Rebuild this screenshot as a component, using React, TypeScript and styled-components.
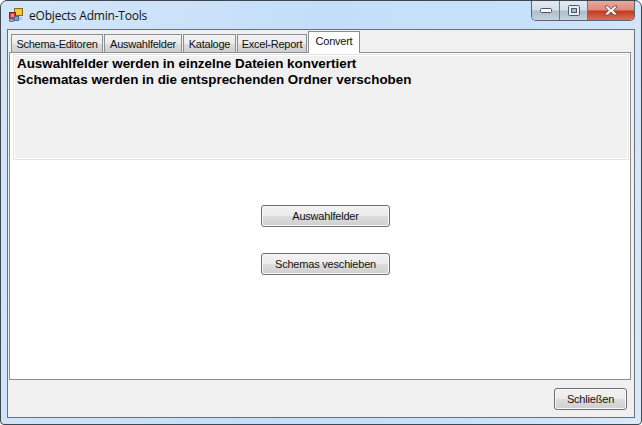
import React from "react";
import styled, { createGlobalStyle } from "styled-components";

const GlobalStyle = createGlobalStyle`
  html, body {
    margin: 0;
    padding: 0;
    background: #fff;
  }
  * {
    box-sizing: border-box;
  }
`;

const tabs = [
  { title: "Schema-Editoren", width: 92 },
  { title: "Auswahlfelder", width: 78 },
  { title: "Kataloge", width: 53 },
  { title: "Excel-Report", width: 70 },
  { title: "Convert", width: 52 },
];

function AppIcon() {
  return (
    <svg width="16" height="16" viewBox="0 0 16 16">
      <rect x="6.5" y="1.5" width="8" height="7" fill="#f5c63c" stroke="#8a6a1c" />
      <rect x="1.5" y="5.5" width="6" height="6" fill="#d8382c" stroke="#7c2420" />
      <rect x="3" y="7" width="3" height="3" fill="#f09080" />
      <rect x="6.5" y="9.5" width="4" height="4" fill="#7f9cc8" stroke="#51698f" />
      <rect x="1.5" y="12" width="4" height="2.5" fill="#8fa8cc" stroke="#6d83a5" />
      <rect x="11" y="10" width="3" height="3" fill="#b8c6da" />
    </svg>
  );
}

function MinGlyph() {
  return (
    <svg width="12" height="6" viewBox="0 0 12 6">
      <rect x="0.5" y="0.5" width="11" height="4" rx="1" fill="#fff" stroke="#4a5564" />
    </svg>
  );
}

function MaxGlyph() {
  return (
    <svg width="12" height="11" viewBox="0 0 12 11">
      <rect x="0.5" y="0.5" width="11" height="10" rx="1" fill="#e8eef5" stroke="#4f5b6b" />
      <rect x="3.5" y="3.5" width="5" height="4" fill="#a9b8c8" stroke="#4f5b6b" />
    </svg>
  );
}

function CloseGlyph() {
  return (
    <svg width="14" height="11" viewBox="0 0 14 11">
      <path
        d="M1 1h3l3 3 3-3h3v1l-3.500 3.500 3.500 3.500v1h-3l-3-3-3 3h-3v-1l3.500-3.500-3.500-3.500z"
        fill="#f0f0f0"
        stroke="#5c4a48"
        strokeWidth="0.8"
      />
    </svg>
  );
}

export default function App() {
  return (
    <>
      <GlobalStyle />
      <Window>
        <TitleBar>
          <AppIcon />
          <Title>eObjects Admin-Tools</Title>
          <CaptionButtons>
            <CaptionButton>
              <MinGlyph />
            </CaptionButton>
            <CaptionButton>
              <MaxGlyph />
            </CaptionButton>
            <CloseButton>
              <CloseGlyph />
            </CloseButton>
          </CaptionButtons>
        </TitleBar>
        <Client>
          <TabStrip>
            {tabs.map((tab) => (
              <Tab key={tab.title} $active={tab.title === "Convert"} $width={tab.width}>
                {tab.title}
              </Tab>
            ))}
          </TabStrip>
          <TabPage>
            <InfoPanel>
              <InfoLine>Auswahlfelder werden in einzelne Dateien konvertiert</InfoLine>
              <InfoLine>Schematas werden in die entsprechenden Ordner verschoben</InfoLine>
            </InfoPanel>
            <ActionArea>
              <Button $width={129}>Auswahlfelder</Button>
              <Button $width={129}>Schemas veschieben</Button>
            </ActionArea>
          </TabPage>
          <Footer>
            <Button $width={73}>Schließen</Button>
          </Footer>
        </Client>
      </Window>
    </>
  );
}

const Window = styled.div`
  width: 642px;
  height: 425px;
  padding: 0 6px 7px;
  border: 1px solid #3e4650;
  border-radius: 7px 7px 4px 4px;
  background: linear-gradient(100deg, #d3e6f8 0%, #c4def9 45%, #c8e1fb 75%, #d9e9f8 100%);
  overflow: hidden;
`;

const TitleBar = styled.div`
  height: 28px;
  display: flex;
  align-items: center;
  padding-left: 1px;
`;

const Title = styled.span`
  margin-left: 5px;
  font: 12px "Open Sans", "Liberation Sans", sans-serif;
  letter-spacing: -0.2px;
  color: #111;
`;

const CaptionButtons = styled.div`
  margin-left: auto;
  align-self: flex-start;
  height: 20px;
  display: flex;
  border: 1px solid #5b6470;
  border-top: none;
  border-radius: 0 0 5px 5px;
  overflow: hidden;
`;

const CaptionButton = styled.div`
  width: 28px;
  display: flex;
  align-items: center;
  justify-content: center;
  border-right: 1px solid #6b7683;
  background: linear-gradient(#e1e9f2 0%, #d5dfe9 48%, #aebdcb 52%, #c6d3de 100%);
`;

const CloseButton = styled.div`
  width: 46px;
  display: flex;
  align-items: center;
  justify-content: center;
  background: linear-gradient(#e9a99c 0%, #dc8c7c 45%, #c63c22 55%, #d8705a 100%);
`;

const Client = styled.div`
  height: 389px;
  display: flex;
  flex-direction: column;
  padding: 3px 3px 0 1px;
  border: 1px solid #6a7078;
  background: #f0f0f0;
`;

const TabStrip = styled.div`
  height: 19px;
  display: flex;
  align-items: flex-end;
  padding-left: 2px;
  gap: 1px;
  position: relative;
  z-index: 1;
`;

const Tab = styled.div<{ $active?: boolean; $width: number }>`
  width: ${(props) => props.$width}px;
  height: ${(props) => (props.$active ? "22px" : "18px")};
  padding-bottom: ${(props) => (props.$active ? "3px" : "0")};
  margin-bottom: ${(props) => (props.$active ? "-1px" : "0")};
  display: flex;
  align-items: center;
  justify-content: center;
  font: 11px "Liberation Sans", Arial, sans-serif;
  letter-spacing: -0.25px;
  color: #111;
  border: 1px solid #8c8e94;
  border-bottom: none;
  background: ${(props) =>
    props.$active ? "#fff" : "linear-gradient(#f3f3f3 0%, #ebebeb 50%, #dcdcdc 52%, #cfcfcf 100%)"};
`;

const TabPage = styled.div`
  flex: 1;
  min-height: 0;
  display: flex;
  flex-direction: column;
  padding: 1px 1px 0 3px;
  border: 1px solid #8c8e94;
  background: #fff;
`;

const InfoPanel = styled.div`
  height: 106px;
  padding: 1px 3px;
  background: #f0f0f0;
  border: 1px solid #e4e4e4;
  box-shadow: inset 0 0 0 1px #fff;
`;

const InfoLine = styled.div`
  font: bold 13.4px/16px "Liberation Sans", Arial, sans-serif;
  color: #000;
`;

const ActionArea = styled.div`
  display: flex;
  flex-direction: column;
  align-items: center;
  gap: 26px;
  padding: 45px 0 0 9px;
`;

const Button = styled.button<{ $width: number }>`
  width: ${(props) => props.$width}px;
  height: 22px;
  padding: 0;
  font: 11px "Liberation Sans", Arial, sans-serif;
  letter-spacing: -0.2px;
  color: #111;
  border: 1px solid #707070;
  border-radius: 3px;
  box-shadow: inset 0 0 0 1px #f8f8f8;
  background: linear-gradient(#f2f2f2 0%, #ebebeb 48%, #dddddd 52%, #cfcfcf 100%);
`;

const Footer = styled.div`
  height: 37px;
  display: flex;
  justify-content: flex-end;
  align-items: flex-start;
  padding: 8px 4px 0 0;
`;
